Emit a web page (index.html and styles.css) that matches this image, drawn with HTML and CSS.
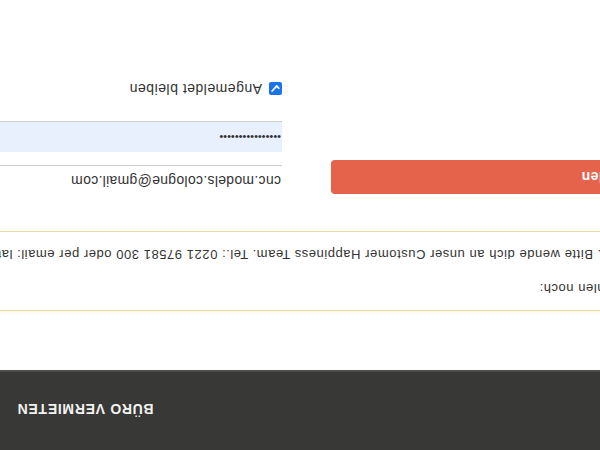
FILE: index.html
```html
<!DOCTYPE html>
<html lang="de">
<head>
<meta charset="utf-8">
<title>Anmelden</title>
<link rel="stylesheet" href="styles.css">
</head>
<body>
<div class="page">
  <header class="topbar">
    <a class="topbar-link" href="#">BÜRO VERMIETEN</a>
  </header>
  <main class="content">
    <section class="notice">
      <p>Für die Freischaltung deines Kontos fehlen noch:</p>
      <p>Dein Konto ist noch nicht freigeschaltet. Bitte wende dich an unser Customer Happiness Team. Tel.: 0221 97581 300 oder per email: latoya@cnc-models.de</p>
    </section>
    <form class="login">
      <div class="login-action">
        <button type="button" class="login-btn">Anmelden</button>
      </div>
      <div class="login-fields">
        <input class="field" type="email" value="cnc.models.cologne@gmail.com">
        <input class="field field-filled field-secret" type="password" value="cncmodels2019abc">
        <label class="remember">
          <span class="check">
            <svg width="13" height="13" viewBox="0 0 13 13"><path d="M3.2 6.8 L5.4 9 L9.8 4" fill="none" stroke="#fff" stroke-width="1.8" stroke-linecap="round" stroke-linejoin="round"/></svg>
          </span>
          Angemeldet bleiben
        </label>
      </div>
    </form>
  </main>
</div>
</body>
</html>
```

FILE: styles.css
```css
* {
  box-sizing: border-box;
  margin: 0;
  padding: 0;
}

html,
body {
  width: 600px;
  height: 450px;
  overflow: hidden;
  background: #fff;
}

body {
  font-family: "Liberation Sans", Arial, sans-serif;
  color: #333;
}

/* the whole viewport is shown turned upside down */
.page {
  width: 600px;
  height: 450px;
  overflow: hidden;
  transform: rotate(180deg);
}

.topbar {
  height: 80px;
  background: #383836;
  border-bottom: 2px solid #4d4d4b;
  display: flex;
  align-items: center;
  justify-content: flex-end;
  padding: 4px 17px 0 0;
}

.topbar-link {
  color: #f2f2f0;
  font-weight: 700;
  font-size: 14px;
  letter-spacing: 0.7px;
  text-decoration: none;
}

.content {
  margin: 59px 0 0 -330px;
  width: 1260px;
}

.notice {
  height: 80px;
  border: 1px solid #f0dba2;
  background: #fff;
  box-shadow: 0 -3px 4px -2px rgba(240, 224, 180, 0.35);
  padding: 12px 0 0 81px;
  font-size: 13px;
  line-height: 20px;
  letter-spacing: 0.55px;
  white-space: nowrap;
}

.notice p + p {
  margin-top: 14px;
}

.login {
  display: grid;
  grid-template-columns: 572px 1fr;
  column-gap: 49px;
  padding-left: 27px;
  margin-top: 35px;
  align-items: start;
}

.login-btn {
  display: block;
  width: 100%;
  height: 34px;
  margin-top: 2px;
  border: 0;
  border-radius: 4px;
  background: #e4634a;
  color: #fff;
  font: 700 14px "Liberation Sans", Arial, sans-serif;
  letter-spacing: 0.5px;
}

.field {
  display: block;
  width: 100%;
  height: 31px;
  border: 0;
  border-bottom: 1px solid #cfcfcf;
  background: #fff;
  color: #333;
  font: 14px "Liberation Sans", Arial, sans-serif;
  letter-spacing: 0.3px;
  padding: 0 1px;
  outline: none;
}

.field + .field {
  margin-top: 13px;
}

.field-filled {
  background: #e8f0fe;
}

.field-secret {
  font-size: 11px;
  letter-spacing: 0;
}

.remember {
  display: flex;
  align-items: center;
  gap: 7px;
  margin-top: 24px;
  font-size: 14px;
  letter-spacing: 0.5px;
}

.check {
  display: flex;
  width: 13px;
  height: 13px;
  border-radius: 2px;
  background: #1a73e8;
}
```
